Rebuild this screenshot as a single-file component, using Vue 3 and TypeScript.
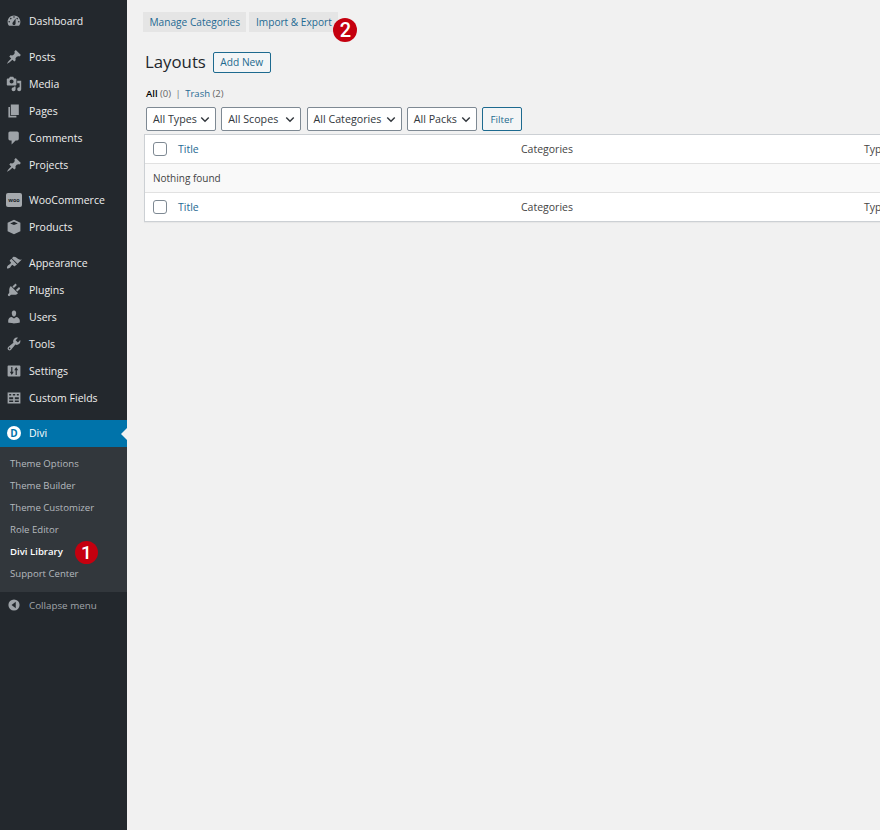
<template>
  <div class="page">
    <aside class="sidebar">
      <div v-for="(group, g) in menuGroups" :key="g" class="menu-group">
        <div v-for="item in group" :key="item.label" class="menu-item">
          <svg class="mi" viewBox="0 0 20 20" fill="currentColor">
            <path :d="item.icon" fill-rule="evenodd" />
          </svg>
          <span>{{ item.label }}</span>
        </div>
      </div>
      <div class="menu-group woo-group">
        <div class="menu-item">
          <span class="woo-icon">woo</span>
          <span>WooCommerce</span>
        </div>
        <div class="menu-item">
          <svg class="mi" viewBox="0 0 20 20" fill="currentColor">
            <path d="M10 1l8 3.6v10.8L10 19l-8-3.6V4.6zM10 3.4L5.2 5.5 10 7.6l4.800-2.100z" fill-rule="evenodd" />
          </svg>
          <span>Products</span>
        </div>
      </div>
      <div v-for="(group, g) in lowerGroups" :key="'l' + g" class="menu-group">
        <div v-for="item in group" :key="item.label" class="menu-item">
          <svg class="mi" viewBox="0 0 20 20" fill="currentColor">
            <path :d="item.icon" fill-rule="evenodd" />
          </svg>
          <span>{{ item.label }}</span>
        </div>
      </div>

      <div class="menu-item current">
        <span class="divi-icon">D</span>
        <span>Divi</span>
      </div>
      <div class="submenu">
        <div v-for="s in subItems" :key="s" :class="['sub-item', { on: s === 'Divi Library' }]">
          {{ s }}
          <span v-if="s === 'Divi Library'" class="badge badge-one">1</span>
        </div>
      </div>
      <div class="collapse">
        <svg class="mi" viewBox="0 0 20 20" fill="currentColor">
          <path d="M10 2a8 8 0 1 0 0 16 8 8 0 0 0 0-16zm2.500 3.500v9L6.500 10z" fill-rule="evenodd" />
        </svg>
        <span>Collapse menu</span>
      </div>
    </aside>

    <main class="content">
      <div class="tabs">
        <a class="tab">Manage Categories</a>
        <a class="tab">Import &amp; Export<span class="badge badge-two">2</span></a>
      </div>

      <div class="heading">
        <h1>Layouts</h1>
        <a class="add-new">Add New</a>
      </div>

      <div class="views">
        <b>All</b> <span class="count">(0)</span> <span class="sep">|</span> <a>Trash</a> <span class="count">(2)</span>
      </div>

      <div class="filters">
        <div v-for="f in filters" :key="f.label" class="select" :style="{ width: f.width + 'px' }">
          <span>{{ f.label }}</span>
          <svg viewBox="0 0 12 8" fill="none">
            <path d="M1.500 1.500L6 6l4.500-4.500" stroke="currentColor" stroke-width="1.700" />
          </svg>
        </div>
        <button class="filter-btn">Filter</button>
      </div>

      <div class="table">
        <div class="row head">
          <div class="cell-title"><span class="check"></span><a>Title</a></div>
          <div>Categories</div>
          <div>Type</div>
        </div>
        <div class="row empty">Nothing found</div>
        <div class="row foot">
          <div class="cell-title"><span class="check"></span><a>Title</a></div>
          <div>Categories</div>
          <div>Type</div>
        </div>
      </div>
    </main>
  </div>
</template>

<script setup lang="ts">
const PIN = 'M10.44 3.02l1.82-1.82 6.36 6.35-1.83 1.82c-1.05-.68-2.48-.57-3.41.36l-.75.75c-.92.93-1.04 2.35-.35 3.41l-1.83 1.82-2.41-2.41-2.8 2.79c-.42.42-3.38 2.71-3.8 2.29s1.86-3.39 2.28-3.81l2.79-2.79L4.1 9.36l1.83-1.82c1.05.69 2.48.57 3.4-.36l.75-.75c.93-.92 1.05-2.35.36-3.41z'

const menuGroups = [
  [
    { label: 'Dashboard', icon: 'M3.76 16h12.48c1.1-1.37 1.76-3.11 1.76-5 0-4.42-3.58-8-8-8s-8 3.58-8 8c0 1.89.66 3.63 1.76 5zM10 4c.55 0 1 .45 1 1s-.45 1-1 1-1-.45-1-1 .45-1 1-1zM6 6c.55 0 1 .45 1 1s-.45 1-1 1-1-.45-1-1 .45-1 1-1zm8 0c.55 0 1 .45 1 1s-.45 1-1 1-1-.45-1-1 .45-1 1-1zm-5.37 5.55L12 7v6c0 1.1-.9 2-2 2s-2-.9-2-2c0-.57.24-1.08.63-1.45zM4 10c.55 0 1 .45 1 1s-.45 1-1 1-1-.45-1-1 .45-1 1-1zm12 0c.55 0 1 .45 1 1s-.45 1-1 1-1-.45-1-1 .45-1 1-1z' },
  ],
  [
    { label: 'Posts', icon: PIN },
    { label: 'Media', icon: 'M13 11V4c0-.55-.45-1-1-1h-1.67L9 1H5L3.67 3H2c-.55 0-1 .45-1 1v7c0 .55.45 1 1 1h10c.55 0 1-.45 1-1zM7 4.500c1.380 0 2.500 1.120 2.500 2.500S8.380 9.500 7 9.500 4.500 8.380 4.500 7 5.620 4.500 7 4.500zM14 6h5v10.500c0 1.380-1.120 2.500-2.500 2.500S14 17.880 14 16.500s1.120-2.500 2.500-2.500c.17 0 .34.02.5.05V9h-3V6zm-4 8.050V13h2v3.500c0 1.380-1.120 2.500-2.500 2.500S7 17.880 7 16.500 8.120 14 9.500 14c.17 0 .34.02.5.05z' },
    { label: 'Pages', icon: 'M6 15V2h10v13H6zm-1 1h8v2H3V5h2v11z' },
    { label: 'Comments', icon: 'M5 2h9c1.100 0 2 .9 2 2v7c0 1.100-.9 2-2 2h-2l-5 5v-5H5c-1.100 0-2-.9-2-2V4c0-1.100.9-2 2-2z' },
    { label: 'Projects', icon: PIN },
  ],
]

const lowerGroups = [
  [
    { label: 'Appearance', icon: 'M14.480 11.060L7.410 3.990l1.500-1.500c.5-.56 2.300-.47 3.510.32 1.210.8 1.430 1.280 2.910 2.100 1.180.64 2.450 1.260 4.450.85zm-.71.71L6.700 4.700 4.930 6.470c-.39.39-.39 1.020 0 1.410l1.060 1.060c.39.39.39 1.030 0 1.420-.6.6-1.430 1.110-2.210 1.690-.35.26-.7.53-1.010.84-1.340 1.340-1.810 2.750-1.400 3.900 1.150.41 2.560-.06 3.400-.89.31-.31.58-.66.84-1.010.58-.78 1.090-1.610 1.690-2.210.39-.39 1.030-.39 1.420 0l1.060 1.060c.39.39 1.020.39 1.410 0z' },
    { label: 'Plugins', icon: 'M13.110 4.360L9.870 7.600 8 5.730l3.240-3.240c.35-.34 1.050-.2 1.560.32.52.51.66 1.210.31 1.550zm-8 1.770l.91-1.120 9.010 9.010-1.190.84c-.71.71-2.630 1.160-3.820 1.160H6.140L4.900 17.260c-.59.59-1.540.59-2.120 0-.59-.58-.59-1.530 0-2.120l1.240-1.240v-3.880c0-1.130.4-3.190 1.090-3.890zm7.260 3.970l3.240-3.240c.34-.35 1.040-.21 1.550.31.52.51.66 1.210.31 1.550l-3.240 3.250z' },
    { label: 'Users', icon: 'M10 9.250c-2.270 0-2.730-3.440-2.730-3.440C7 4.020 7.820 2 9.970 2c2.160 0 2.980 2.020 2.710 3.810 0 0-.41 3.440-2.680 3.440zm0 2.570L12.720 10c2.390 0 4.520 2.330 4.520 4.530v2.490s-3.650 1.130-7.240 1.130c-3.650 0-7.240-1.130-7.240-1.130v-2.490c0-2.250 1.940-4.480 4.470-4.480z' },
    { label: 'Tools', icon: 'M16.680 9.770c-1.340 1.340-3.300 1.670-4.950.99l-5.410 6.520c-.99.99-2.590.99-3.580 0s-.99-2.590 0-3.570l6.520-5.420c-.68-1.650-.35-3.610.99-4.950 1.280-1.280 3.120-1.620 4.720-1.060l-2.890 2.890 2.820 2.820 2.860-2.870c.53 1.580.18 3.390-1.080 4.650zM3.810 16.210c.4.39 1.040.39 1.430 0 .4-.4.4-1.040 0-1.430-.39-.4-1.030-.4-1.430 0-.39.39-.39 1.030 0 1.430z' },
    { label: 'Settings', icon: 'M18 16V4c0-.55-.45-1-1-1H3c-.55 0-1 .45-1 1v12c0 .55.45 1 1 1h14c.55 0 1-.45 1-1zM6.500 5h1.500v6h1.700L7.250 15 4.800 11h1.700zM12 15V9h-1.700l2.450-4 2.450 4h-1.700v6z' },
    { label: 'Custom Fields', icon: 'M2 3h16v14H2zM4 5v2h2.500V5zm4.500 0v2h3V5zm5 0v2H16V5zM4 9v2.500h5V9zm7 0v2.500h5V9zM4 13v2h5v-2zm7 0v2h5v-2z' },
  ],
]

const subItems = ['Theme Options', 'Theme Builder', 'Theme Customizer', 'Role Editor', 'Divi Library', 'Support Center']

const filters = [
  { label: 'All Types', width: 70 },
  { label: 'All Scopes', width: 80 },
  { label: 'All Categories', width: 95 },
  { label: 'All Packs', width: 70 },
]
</script>

<style>
html, body { margin: 0; background: #f1f1f1; overflow: hidden; }
</style>

<style scoped>
.page {
  display: flex;
  width: 880px;
  height: 830px;
  overflow: hidden;
  font-family: 'Open Sans', 'Noto Sans', sans-serif;
  font-size: 10.5px;
  color: #3c434a;
  background: #f1f1f1;
}

/* Sidebar */
.sidebar {
  width: 127px;
  flex-shrink: 0;
  background: #23282d;
  padding-top: 7.500px;
  box-sizing: border-box;
}

.menu-group { margin-bottom: 8.500px; }

.menu-item {
  display: flex;
  align-items: center;
  height: 27px;
  padding-left: 6px;
  gap: 7px;
  color: #eeeeee;
  font-size: 10.500px;
}

.mi { width: 16px; height: 16px; color: #9ea3a8; flex-shrink: 0; }

.woo-icon {
  width: 16px;
  height: 14px;
  border-radius: 2px;
  background: #a5a9ad;
  color: #23282d;
  font-size: 5.500px;
  font-weight: 700;
  line-height: 14px;
  text-align: center;
  flex-shrink: 0;
}

.menu-item.current {
  position: relative;
  background: #0073aa;
  color: #fff;
}
.menu-item.current::after {
  content: '';
  position: absolute;
  right: 0;
  top: 8px;
  border: 6px solid transparent;
  border-left-width: 0;
  border-right-color: #f1f1f1;
}

.divi-icon {
  width: 14px;
  height: 14px;
  margin-left: 1px;
  margin-right: 1px;
  border-radius: 50%;
  background: #fff;
  color: #0073aa;
  font-size: 10px;
  font-weight: 700;
  line-height: 14px;
  text-align: center;
}

.submenu {
  background: #32373c;
  padding: 6px 0 6px;
}

.sub-item {
  position: relative;
  height: 22.200px;
  line-height: 22.200px;
  padding-left: 10px;
  font-size: 9.600px;
  color: #b4b9be;
}
.sub-item.on { color: #fff; font-weight: 600; font-size: 9.600px; }

.collapse {
  display: flex;
  align-items: center;
  gap: 8px;
  height: 27px;
  padding: 0 0 0 7px;
  font-size: 9.800px;
  color: #a0a5aa;
}
.collapse .mi { width: 14px; height: 14px; }

.badge {
  position: absolute;
  border-radius: 50%;
  background: #c5000f;
  color: #fff;
  text-align: center;
  font-family: 'Roboto', sans-serif;
  font-weight: 500;
}
.badge-one {
  left: 75px;
  top: 0;
  width: 23px;
  height: 23px;
  line-height: 23px;
  font-size: 19px;
}
.badge-two {
  right: -19px;
  top: 6px;
  width: 24px;
  height: 24px;
  line-height: 24px;
  font-size: 20px;
}

/* Content */
.content {
  flex: 1;
  min-width: 0;
  padding: 12px 0 0 16px;
  box-sizing: border-box;
}

.tabs {
  display: flex;
  gap: 3px;
}

.tab {
  position: relative;
  height: 20px;
  line-height: 20px;
  padding: 0 6.500px;
  background: #e5e5e5;
  color: #1f6a93;
  font-size: 10.150px;
  font-weight: 500;
}

.heading {
  display: flex;
  align-items: center;
  gap: 7px;
  margin: 19px 0 0 2px;
}

h1 {
  margin: 0;
  font-size: 16.800px;
  font-weight: 400;
  line-height: 22px;
  color: #23282d;
}

.add-new {
  height: 19px;
  line-height: 19px;
  padding: 0 6.500px;
  border: 1px solid #1d6a8f;
  border-radius: 2px;
  background: #f3f5f6;
  color: #1d6a8f;
  font-size: 10.200px;
  font-weight: 500;
}

.views {
  margin: 14px 0 0 3px;
  font-size: 9.500px;
  line-height: 14px;
  color: #666;
}
.views b { color: #000; font-weight: 600; }
.views a { color: #1f6a93; }
.views .sep { margin: 0 2px; color: #777; }

.filters {
  display: flex;
  gap: 5.250px;
  margin: 6px 0 0 3px;
}

.select {
  display: flex;
  align-items: center;
  justify-content: space-between;
  height: 24px;
  padding: 0 5px 0 6px;
  border: 1px solid #7e8993;
  border-radius: 2px;
  box-sizing: border-box;
  background: #fff;
  color: #32373c;
  font-size: 10.700px;
  white-space: nowrap;
}
.select svg { width: 10px; height: 7px; color: #32373c; flex-shrink: 0; }

.filter-btn {
  width: 40px;
  height: 24px;
  padding: 0;
  border: 1px solid #1d6a8f;
  border-radius: 2px;
  background: #f3f5f6;
  color: #1d6a8f;
  font-family: inherit;
  font-size: 9.800px;
}

.table {
  width: 1000px;
  margin: 3px 0 0 1px;
  border: 1px solid #ccd0d4;
  box-sizing: border-box;
  background: #fff;
  box-shadow: 0 1px 1px rgba(0, 0, 0, 0.04);
}

.row {
  display: grid;
  grid-template-columns: 376px 343px 1fr;
  align-items: center;
  height: 27.500px;
  font-size: 10.500px;
  color: #444;
}
.row.head { border-bottom: 1px solid #e1e1e1; }
.row.foot { border-top: 1px solid #e1e1e1; height: 28px; }
.row.empty {
  display: block;
  height: 28px;
  line-height: 28px;
  padding-left: 8px;
  background: #f9f9f9;
  font-size: 10px;
}

.cell-title {
  display: flex;
  align-items: center;
  gap: 11px;
  padding-left: 8px;
}
.cell-title a { color: #1f6a93; }

.check {
  width: 12px;
  height: 12px;
  border: 1px solid #7e8993;
  border-radius: 3px;
  background: #fff;
  box-sizing: content-box;
}
</style>
